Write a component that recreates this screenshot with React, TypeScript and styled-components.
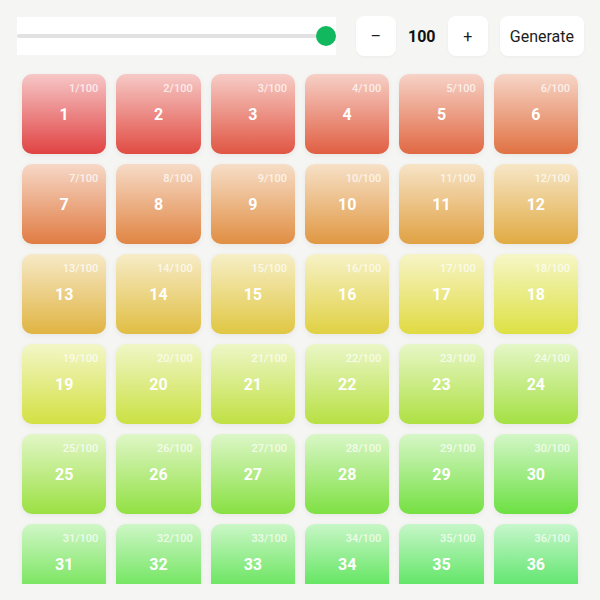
import * as React from "react";
import styled, { createGlobalStyle } from "styled-components";

const GlobalStyle = createGlobalStyle`
    html, body {
        margin: 0;
        padding: 0;
        background: #f5f5f3;
        font-family: Roboto, "Liberation Sans", sans-serif;
    }
`;

const Page = styled.div`
    box-sizing: border-box;
    display: flex;
    flex-direction: column;
    gap: 12px;

    height: 100vh;
    padding: 16px;
`;

const Toolbar = styled.div`
    display: flex;
    align-items: center;
    gap: 12px;

    height: 40px;
    flex-shrink: 0;
`;

const Range = styled.input`
    flex: 1;
    min-width: 0;
    height: 38px;
    margin: 0 8px 0 1px;

    appearance: none;
    -webkit-appearance: none;
    background: #ffffff;
    cursor: pointer;

    &::-webkit-slider-runnable-track {
        height: 4px;
        border-radius: 2px;
        background: #e2e2e2;
    }

    &::-webkit-slider-thumb {
        -webkit-appearance: none;
        width: 20px;
        height: 20px;
        margin-top: -8px;
        border: none;
        border-radius: 50%;
        background: #12b85e;
    }
`;

const Button = styled.button`
    height: 40px;
    min-width: 40px;
    padding: 0 10px;

    border: none;
    border-radius: 8px;
    background: #ffffff;
    box-shadow: 0 1px 3px rgba(0, 0, 0, 0.04);

    color: #1c1c1c;
    font-family: Roboto, "Liberation Sans", sans-serif;
    font-size: 16px;
    cursor: pointer;
`;

const Count = styled.span`
    width: 28px;
    text-align: center;

    color: #111111;
    font-size: 16px;
    font-weight: 700;
`;

const Scroller = styled.div`
    flex: 1;
    min-height: 0;
    overflow-y: auto;
    scrollbar-width: none;

    &::-webkit-scrollbar {
        display: none;
    }
`;

const Grid = styled.div`
    display: grid;
    grid-template-columns: repeat(6, 1fr);
    gap: 10px;
    padding: 6px;
`;

const Card = styled.div<{ $hue: number }>`
    position: relative;
    display: flex;
    align-items: center;
    justify-content: center;

    height: 80px;
    border-radius: 10px;
    background-color: #ffffff;
    background-image: linear-gradient(
        to bottom,
        hsla(${p => p.$hue}, 74%, 58%, 0.3),
        hsl(${p => p.$hue}, 72%, 57%)
    );
    box-shadow: 0 2px 6px rgba(0, 0, 0, 0.06);

    color: #ffffff;
    font-size: 16px;
    font-weight: 700;
`;

const Tag = styled.span`
    position: absolute;
    top: 8px;
    right: 8px;

    font-size: 11px;
    font-weight: 500;
    opacity: 0.75;
`;

export default function App() {
    const [total, setTotal] = React.useState(100);
    const [items, setItems] = React.useState(() => Array.from({ length: 100 }, (_, i) => i + 1));

    const generate = () => setItems(Array.from({ length: total }, (_, i) => i + 1));

    return (
        <>
            <GlobalStyle />
            <Page>
                <Toolbar>
                    <Range type="range" min={1} max={100} value={total} onChange={e => setTotal(Number(e.target.value))} />
                    <Button onClick={() => setTotal(Math.max(1, total - 1))}>–</Button>
                    <Count>{total}</Count>
                    <Button onClick={() => setTotal(Math.min(100, total + 1))}>+</Button>
                    <Button onClick={generate}>Generate</Button>
                </Toolbar>
                <Scroller>
                    <Grid>
                        {items.map(n => (
                            <Card key={n} $hue={((n - 1) / items.length) * 360}>
                                <Tag>
                                    {n}/{items.length}
                                </Tag>
                                {n}
                            </Card>
                        ))}
                    </Grid>
                </Scroller>
            </Page>
        </>
    );
}
